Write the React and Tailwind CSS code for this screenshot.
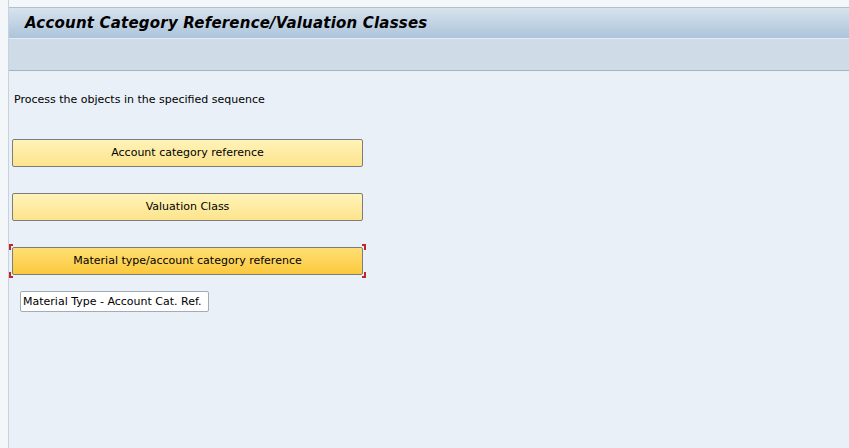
export default function App() {
  const font = { fontFamily: 'Tahoma, "DejaVu Sans", sans-serif' }
  return (
    <div className="flex h-[448px] w-[849px] bg-[#f4f7fa] overflow-hidden" style={font}>
      <div className="w-[8px] shrink-0 bg-[#f4f7fa]" />
      <div className="flex flex-1 flex-col border-l border-[#c9d2dc]">
        <div className="h-[7px] bg-[#f4f7fa]" />
        {/* title bar */}
        <div className="flex h-[31px] items-center border-t border-[#b4bfca] bg-gradient-to-b from-[#d7e3ee] to-[#adc4da] pl-[16px]">
          <span className="text-[15px] font-bold italic text-black tracking-[0.2px]">
            Account Category Reference/Valuation Classes
          </span>
        </div>
        {/* toolbar */}
        <div className="h-[33px] border-t border-[#e3ecf4] border-b border-b-[#a6b2be] bg-[#cfdce7]" />
        {/* content */}
        <div className="flex flex-1 flex-col bg-[#e9f0f8] pl-[3px]">
          <p className="ml-[2px] mt-[22px] text-[11px] leading-[14px] text-black">
            Process the objects in the specified sequence
          </p>
          <button className="mt-[32px] h-[28px] w-[351px] rounded-[2px] border border-[#7d7d7d] bg-gradient-to-b from-[#fff3b8] to-[#fde48c] text-[11px] text-black">
            Account category reference
          </button>
          <button className="mt-[26px] h-[28px] w-[351px] rounded-[2px] border border-[#7d7d7d] bg-gradient-to-b from-[#fff3b8] to-[#fde48c] text-[11px] text-black">
            Valuation Class
          </button>
          <div className="relative mt-[26px] w-[351px]">
            <span className="absolute -left-[3px] -top-[3px] h-[6px] w-[4px] border-l-2 border-t-2 border-[#c0272d]" />
            <span className="absolute -right-[3px] -top-[3px] h-[6px] w-[4px] border-r-2 border-t-2 border-[#c0272d]" />
            <span className="absolute -left-[3px] -bottom-[3px] h-[6px] w-[4px] border-l-2 border-b-2 border-[#c0272d]" />
            <span className="absolute -right-[3px] -bottom-[3px] h-[6px] w-[4px] border-r-2 border-b-2 border-[#c0272d]" />
            <button className="h-[28px] w-[351px] rounded-[2px] border border-[#7d7d7d] bg-gradient-to-b from-[#ffdf72] to-[#fbc93a] text-[11px] text-black">
              Material type/account category reference
            </button>
          </div>
          <div className="ml-[8px] mt-[16px] flex h-[21px] w-[189px] items-center rounded-[2px] border border-[#a3acb6] bg-white px-[2px] text-[11px] text-black">
            Material Type - Account Cat. Ref.
          </div>
        </div>
      </div>
    </div>
  )
}
